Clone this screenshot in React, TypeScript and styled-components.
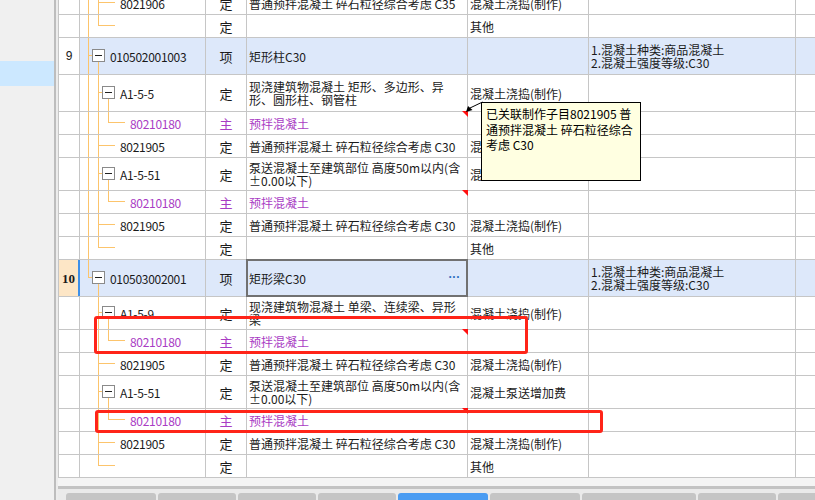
import React from 'react';
import styled, { createGlobalStyle, css } from 'styled-components';

const lineColor = '#c6c6c6';
const treeColor = '#fcc46c';
const purple = '#a93cc4';
const itemBg = '#dde8fa';

type Level = 0 | 1 | 2;

interface RowData {
  h: number;
  level: Level;
  code: string;
  kind: string;
  name?: string;
  work?: string;
  desc?: string;
  num?: string;
  box?: boolean;
  last?: boolean;
  passes: number[];
  main?: boolean;
  item?: boolean;
  mark?: boolean;
  selected?: boolean;
  current?: boolean;
}

const C30 = '普通预拌混凝土 碎石粒径综合考虑 C30';
const POUR = '混凝土浇捣(制作)';
const PUMP = '泵送混凝土至建筑部位 高度50m以内(含\n±0.00以下)';
const DESC = '1.混凝土种类:商品混凝土\n2.混凝土强度等级:C30';

const rows: RowData[] = [
  { h: 23, level: 1, code: '8021906', kind: '定', name: '普通预拌混凝土 碎石粒径综合考虑 C35', work: POUR, passes: [8] },
  { h: 23, level: 1, code: '', kind: '定', work: '其他', last: true, passes: [8] },
  { h: 37, level: 0, num: '9', code: '010502001003', kind: '项', name: '矩形柱C30', desc: DESC, box: true, item: true, passes: [] },
  { h: 37, level: 1, code: 'A1-5-5', kind: '定', name: '现浇建筑物混凝土 矩形、多边形、异\n形、圆形柱、钢管柱', work: POUR, box: true, passes: [8] },
  { h: 23, level: 2, code: '80210180', kind: '主', name: '预拌混凝土', main: true, mark: true, last: true, passes: [8, 18] },
  { h: 23, level: 1, code: '8021905', kind: '定', name: C30, work: POUR, passes: [8] },
  { h: 33, level: 1, code: 'A1-5-51', kind: '定', name: PUMP, work: '混凝土泵送增加费', box: true, passes: [8] },
  { h: 23, level: 2, code: '80210180', kind: '主', name: '预拌混凝土', main: true, mark: true, last: true, passes: [8, 18] },
  { h: 23, level: 1, code: '8021905', kind: '定', name: C30, work: POUR, passes: [8] },
  { h: 23, level: 1, code: '', kind: '定', work: '其他', last: true, passes: [8] },
  { h: 37, level: 0, num: '10', code: '010503002001', kind: '项', name: '矩形梁C30', desc: DESC, box: true, last: true, item: true, selected: true, current: true, passes: [] },
  { h: 33, level: 1, code: 'A1-5-9', kind: '定', name: '现浇建筑物混凝土 单梁、连续梁、异形\n梁', work: POUR, box: true, passes: [] },
  { h: 23, level: 2, code: '80210180', kind: '主', name: '预拌混凝土', main: true, mark: true, last: true, passes: [18] },
  { h: 23, level: 1, code: '8021905', kind: '定', name: C30, work: POUR, passes: [] },
  { h: 33, level: 1, code: 'A1-5-51', kind: '定', name: PUMP, work: '混凝土泵送增加费', box: true, passes: [] },
  { h: 23, level: 2, code: '80210180', kind: '主', name: '预拌混凝土', main: true, mark: true, last: true, passes: [18] },
  { h: 23, level: 1, code: '8021905', kind: '定', name: C30, work: POUR, passes: [] },
  { h: 23, level: 1, code: '', kind: '定', work: '其他', last: true, passes: [] },
];

const tabs = [
  { label: '工料机显示', w: 90 },
  { label: '单价构成', w: 78 },
  { label: '标准换算', w: 78 },
  { label: '换算信息', w: 78 },
  { label: '特征及内容', w: 90, active: true },
  { label: '组价方案', w: 90 },
  { label: '工程量明细', w: 114 },
  { label: '说明信息', w: 78 },
  { label: '反查图形', w: 78 },
];

function TreeGuide({ row }: { row: RowData }) {
  const H = row.h - 1;
  const mid = Math.floor(H / 2) - 1;
  const y = mid + 0.5;
  const conn = [8, 18, 28][row.level];
  const boxLeft = conn + 4;
  return (
    <TreeSvg width={126} height={H}>
      <g stroke={treeColor} strokeWidth={1}>
        {row.passes.map((x) => (
          <line key={x} x1={x + 0.5} y1={0} x2={x + 0.5} y2={H} />
        ))}
        <line x1={conn + 0.5} y1={0} x2={conn + 0.5} y2={row.last ? y : H} />
        {row.box ? (
          <>
            <line x1={conn} y1={y} x2={boxLeft} y2={y} />
            <line x1={boxLeft + 6.5} y1={mid + 7} x2={boxLeft + 6.5} y2={H} />
          </>
        ) : (
          <line x1={conn} y1={y} x2={conn + 17} y2={y} />
        )}
      </g>
      {row.box && (
        <>
          <rect x={boxLeft + 0.5} y={mid - 6 + 0.5} width={12} height={12} fill="#fff" stroke="#8a8a8a" />
          <line x1={boxLeft + 3} y1={y} x2={boxLeft + 10} y2={y} stroke="#222" />
        </>
      )}
    </TreeSvg>
  );
}

export default function App() {
  return (
    <>
      <GlobalStyle />
      <Screen>
        <SidePanel>
          <SideHighlight />
        </SidePanel>
        <Main>
          <GridViewport>
            <Table>
              {rows.map((row, i) => (
                <Row key={i} $h={row.h} $bg={row.item ? itemBg : '#fff'}>
                  <NumCell $current={row.current}>{row.num}</NumCell>
                  <CodeCell $level={row.level} $main={row.main}>
                    <TreeGuide row={row} />
                    <CodeText>{row.code}</CodeText>
                  </CodeCell>
                  <KindCell $main={row.main}>{row.kind}</KindCell>
                  <NameCell $main={row.main} $mark={row.mark} $selected={row.selected}>
                    {row.name}
                    {row.selected && <MoreDots>...</MoreDots>}
                  </NameCell>
                  <TextCell>{row.work}</TextCell>
                  <TextCell>{row.desc}</TextCell>
                  <FillCell />
                </Row>
              ))}
            </Table>
          </GridViewport>
          <Footer>
            <FooterStrip />
            <FooterDivider />
            <TabBar>
              {tabs.map((t) => (
                <Tab key={t.label} $w={t.w} $active={t.active}>
                  {t.label}
                </Tab>
              ))}
            </TabBar>
          </Footer>
        </Main>

        <Tooltip>
          {'已关联制作子目8021905 普\n通预拌混凝土 碎石粒径综合\n考虑 C30'}
        </Tooltip>
        <TipArrow width={24} height={18} viewBox="0 0 24 18">
          <line x1={8} y1={10} x2={20.5} y2={4} stroke="#000" strokeWidth={1} />
          <polygon points="4,14 6,8 10.5,12" fill="#000" />
        </TipArrow>
        <Callout style={{ left: 94, top: 316, width: 434, height: 38 }} />
        <Callout style={{ left: 95, top: 410, width: 508, height: 23 }} />
      </Screen>
    </>
  );
}

const GlobalStyle = createGlobalStyle`
  html, body {
    margin: 0;
    padding: 0;
    background: #fff;
  }
  body {
    font-family: "Noto Sans CJK SC", "Noto Sans", sans-serif;
    font-size: 12px;
    color: #1a1a1a;
  }
`;

const Screen = styled.div`
  position: relative;
  display: flex;
  width: 815px;
  height: 500px;
  overflow: hidden;
  background: #ececec;
`;

const SidePanel = styled.div`
  width: 54px;
  flex-shrink: 0;
  padding-top: 61px;
  background: #f0f0f0;
  border-right: 2px solid #bdbdbd;
`;

const SideHighlight = styled.div`
  height: 25px;
  background: #cce8ff;
`;

const Main = styled.div`
  flex: 1;
  margin-left: 2px;
  display: flex;
  flex-direction: column;
  min-width: 0;
`;

const GridViewport = styled.div`
  flex-shrink: 0;
  height: 478px;
  overflow: hidden;
  background: #fff;
  border-left: 1px solid ${lineColor};
`;

const Table = styled.div`
  margin-top: -8px;
`;

const Row = styled.div<{ $h: number; $bg: string }>`
  display: grid;
  grid-template-columns: 21px 126px 41px 221px 121px 207px 1fr;
  height: ${(p) => p.$h}px;
  box-sizing: border-box;
  border-bottom: 1px solid ${lineColor};
  background: ${(p) => p.$bg};
`;

const Cell = styled.div`
  position: relative;
  display: flex;
  align-items: center;
  box-sizing: border-box;
  padding: 0 2px;
  border-right: 1px solid ${lineColor};
  white-space: pre-line;
  line-height: 13px;
  overflow: visible;
  min-width: 0;
`;

const NumCell = styled(Cell)<{ $current?: boolean }>`
  justify-content: center;
  padding: 0;
  background: ${(p) => (p.$current ? '#fde6c6' : '#fff')};
  font-family: "Liberation Sans", sans-serif;
  font-weight: ${(p) => (p.$current ? 700 : 400)};
  ${(p) =>
    p.$current &&
    css`
      border-right: 2px solid #3d8fe8;
      font-family: "Liberation Serif", serif;
      font-size: 13px;
    `}
`;

const CodeCell = styled(Cell)<{ $level: Level; $main?: boolean }>`
  padding-left: ${(p) => [30, 40, 50][p.$level]}px;
  color: ${(p) => (p.$main ? purple : '#1a1a1a')};
  overflow: hidden;
`;

const TreeSvg = styled.svg`
  position: absolute;
  left: 0;
  top: 0;
  display: block;
`;

const CodeText = styled.span`
  position: relative;
  letter-spacing: -0.3px;
`;

const KindCell = styled(Cell)<{ $main?: boolean }>`
  justify-content: center;
  padding: 0;
  font-size: 13px;
  color: ${(p) => (p.$main ? purple : '#1a1a1a')};
`;

const NameCell = styled(Cell)<{ $main?: boolean; $mark?: boolean; $selected?: boolean }>`
  color: ${(p) => (p.$main ? purple : '#1a1a1a')};
  ${(p) =>
    p.$mark &&
    css`
      &::after {
        content: '';
        position: absolute;
        top: -1px;
        right: -1px;
        border-top: 6px solid #ff1010;
        border-left: 6px solid transparent;
      }
    `}
  ${(p) =>
    p.$selected &&
    css`
      &::before {
        content: '';
        position: absolute;
        left: -1px;
        top: -1px;
        right: -1px;
        bottom: -1px;
        border: 2px solid #717171;
        box-sizing: border-box;
      }
    `}
`;

const MoreDots = styled.span`
  position: absolute;
  right: 7px;
  top: 8px;
  color: #2f6fc0;
  font-family: "Liberation Sans", sans-serif;
  font-weight: 700;
  font-size: 12px;
  line-height: 13px;
  letter-spacing: 0.5px;
`;

const TextCell = styled(Cell)``;

const FillCell = styled(Cell)`
  border-right: none;
`;

const Footer = styled.div`
  flex-shrink: 0;
  height: 22px;
  display: flex;
  flex-direction: column;
  overflow: hidden;
`;

const FooterStrip = styled.div`
  flex-shrink: 0;
  height: 8px;
  background: #f4f4f4;
`;

const FooterDivider = styled.div`
  flex-shrink: 0;
  height: 3px;
  background: #c3c3c3;
`;

const TabBar = styled.div`
  flex-shrink: 0;
  display: flex;
  gap: 2px;
  padding: 4px 0 0 8px;
  background: #eaeaea;
  height: 30px;
`;

const Tab = styled.div<{ $w: number; $active?: boolean }>`
  flex-shrink: 0;
  width: ${(p) => p.$w}px;
  height: 22px;
  padding-top: 6px;
  box-sizing: border-box;
  text-align: center;
  border-radius: 3px 3px 0 0;
  background: ${(p) => (p.$active ? '#4a9cf2' : '#c5c5c5')};
  color: ${(p) => (p.$active ? '#fff' : '#222')};
  line-height: 14px;
`;

const Tooltip = styled.div`
  position: absolute;
  left: 481px;
  top: 102px;
  width: 160px;
  height: 79px;
  box-sizing: border-box;
  padding: 3px 0 0 4px;
  background: #ffffe1;
  border: 1px solid #000;
  white-space: pre-line;
  line-height: 15.5px;
  font-size: 12px;
  color: #000;
`;

const TipArrow = styled.svg`
  position: absolute;
  left: 462px;
  top: 98px;
`;

const Callout = styled.div`
  position: absolute;
  box-sizing: border-box;
  border: 3px solid #ff2418;
  border-radius: 3px;
  pointer-events: none;
`;
